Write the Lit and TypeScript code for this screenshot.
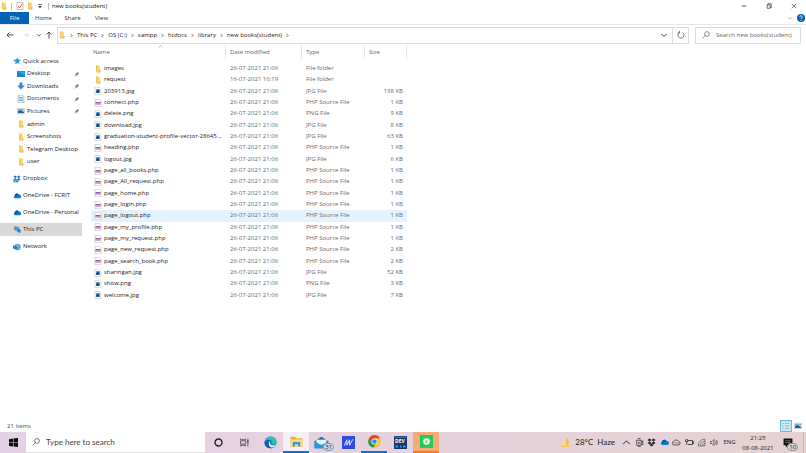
import { LitElement, html, css, svg, nothing } from "lit";
import type { TemplateResult } from "lit";
import { customElement, property, state } from "lit/decorators.js";
import { classMap } from "lit/directives/class-map.js";

const shapes: Record<string, [string, TemplateResult]> = {
  folder: ["0 0 16 16", svg`<path d="M4 1h8v14H4z" fill="#fbd978"/><path d="M4 1h3v14l-3-1z" fill="#f4c64f"/><path d="M11 10h2v5h-6z" fill="#eebd52"/>`],
  image: ["0 0 16 16", svg`<path d="M2 .5h9l3 3v12H2z" fill="#fff" stroke="#a9b1ba"/><path d="M4.500 4.500h7v7h-7z" fill="#1d6fb8"/><path d="M4.500 11.500v-3l3-2 4 5z" fill="#123f7a"/>`],
  php: ["0 0 16 16", svg`<path d="M2 .5h9l3 3v12H2z" fill="#fff" stroke="#aaa4b4"/><path d="M3 6h10v5H3z" fill="#8f5fa8"/><path d="M4 8h8v1H4z" fill="#e8d9ef"/>`],
  check: ["0 0 16 16", svg`<path d="M2 1h12v14H2z" fill="#fff" stroke="#8a8a8a"/><path d="M4 8l3 4 6-9" fill="none" stroke="#d9633b" stroke-width="2"/>`],
  star: ["0 0 16 16", svg`<path d="M9 1l2 4 5 1-4 3 1 5-4-2-5 3 1-5-5-4 6-1z" fill="#2f9be0"/>`],
  desktop: ["0 0 16 16", svg`<path d="M0 2h16v12H0z" fill="#1583d6"/><path d="M1 3h14v8z" fill="#2ba0ec"/>`],
  down: ["0 0 16 16", svg`<path d="M5 1h6v6h5l-8 8-8-8h5z" fill="#3d86c6"/>`],
  doc: ["0 0 16 16", svg`<path d="M2 .5h9l3 3v12H2z" fill="#e6eef4" stroke="#8d9ba8"/><path d="M4 5h8M4 8h8M4 11h8" stroke="#5d9bcb" stroke-width="1.500"/>`],
  picture: ["0 0 16 16", svg`<path d="M.5 2.500h15v11H.5z" fill="#e9f3fa" stroke="#93a5b5"/><path d="M2 4h12v3H2z" fill="#79bbe6"/><path d="M2 12V8l5-2 7 4v2z" fill="#245a93"/>`],
  pin: ["0 0 16 16", svg`<path d="M9 2l5 5-2 1-3 3-1 3-6-6 3-1 3-3z" fill="#7d8890"/><path d="M5 11l-4 4" stroke="#7d8890" stroke-width="1.500"/>`],
  dropbox: ["0 0 18 16", svg`<path d="M5 0l4 3-4 3-4-3zM13 0l4 3-4 3-4-3zM5 6l4 3-4 3-4-3zM13 6l4 3-4 3-4-3zM9 10l4 3-4 3-4-3z" fill="currentColor"/>`],
  dropboxOk: ["0 0 18 16", svg`<path d="M5 0l4 3-4 3-4-3zM13 0l4 3-4 3-4-3zM5 6l4 3-4 3-4-3zM13 6l4 3-4 3-4-3zM9 10l4 3-4 3-4-3z" fill="#1468e0"/><circle cx="4.500" cy="12" r="4" fill="#35a853"/><path d="M2.500 12l2 2 3-4" fill="none" stroke="#fff"/>`],
  cloud: ["0 0 18 12", svg`<path d="M4 11a4 4 0 0 1 0-7A5 5 0 0 1 13 3a4 4 0 0 1 2 8z" fill="#1279cf"/><path d="M4 4a5 5 0 0 1 9-1l-7 5z" fill="#0a5cab"/>`],
  cloudLine: ["0 0 18 12", svg`<path d="M4 11a3.500 3.500 0 0 1 0-7A5 5 0 0 1 13 3.500a4 4 0 0 1 1 7.500z" fill="none" stroke="#333" stroke-width="1.500"/><path d="M4 7h10" stroke="#333"/>`],
  pc: ["0 0 16 16", svg`<path d="M3 1l9 2v7L3 8z" fill="#3ba4e6" stroke="#5a7c98"/><path d="M9 6l6 1v7l-6-2z" fill="#1c83cf"/>`],
  network: ["0 0 16 16", svg`<circle cx="9" cy="8" r="6.500" fill="#4a9ed6"/><path d="M4 3c5 0 9 4 8 10M13 2C8 4 5 8 6 14" stroke="#b8def3" fill="none"/><path d="M0 5l8 2v6l-8-2z" fill="#2f7fb8"/>`],
  back: ["0 0 16 16", svg`<path d="M15 8H2M7 3L2 8l5 5" fill="none" stroke="currentColor" stroke-width="1.700"/>`],
  forward: ["0 0 16 16", svg`<path d="M1 8h13M9 3l5 5-5 5" fill="none" stroke="currentColor" stroke-width="1.500"/>`],
  up: ["0 0 16 16", svg`<path d="M8 15V2M3 7l5-5 5 5" fill="none" stroke="currentColor" stroke-width="1.700"/>`],
  chevDown: ["0 0 16 16", svg`<path d="M3 6l5 5 5-5" fill="none" stroke="currentColor" stroke-width="2"/>`],
  chevUp: ["0 0 16 16", svg`<path d="M2 11l6-6 6 6" fill="none" stroke="currentColor" stroke-width="1.700"/>`],
  chevRight: ["0 0 16 16", svg`<path d="M5 3l5 5-5 5" fill="none" stroke="currentColor" stroke-width="2"/>`],
  customize: ["0 0 16 16", svg`<path d="M3 4h10" stroke="#333" stroke-width="2"/><path d="M3 8h10l-5 6z" fill="#333"/>`],
  refresh: ["0 0 16 16", svg`<path d="M11 3a6 6 0 1 1-6 0M5 0v4H1" fill="none" stroke="#555" stroke-width="1.600"/>`],
  lens: ["0 0 16 16", svg`<circle cx="10" cy="6" r="4.800" fill="none" stroke="currentColor" stroke-width="1.400"/><path d="M6.500 9.500L1 15" stroke="currentColor" stroke-width="1.400"/>`],
  min: ["0 0 16 16", svg`<path d="M2 8h12" stroke="#222" stroke-width="2"/>`],
  restore: ["0 0 16 16", svg`<path d="M3 5h8v9H3zM5 5V2h9v10h-3" fill="none" stroke="#222" stroke-width="1.700"/>`],
  close: ["0 0 16 16", svg`<path d="M2 2l12 12M14 2L2 14" stroke="#222" stroke-width="1.600"/>`],
  help: ["0 0 16 16", svg`<circle cx="8" cy="8" r="8" fill="#0b62bb"/><path d="M5.500 6a2.500 2.500 0 1 1 3.500 2.300q-1 .5-1 1.700M8 11.500v2" fill="none" stroke="#fff" stroke-width="1.600"/>`],
  windows: ["0 0 16 16", svg`<path d="M0 2l7-1v6.500H0zM8 1l8-1v7.500H8zM0 8.500h7V15l-7-1zM8 8.500h8V16l-8-1z" fill="#0b0b0b"/>`],
  cortana: ["0 0 16 16", svg`<circle cx="8" cy="8" r="6.200" fill="none" stroke="#222" stroke-width="2.400"/>`],
  taskview: ["0 0 16 16", svg`<path d="M1 1v2h9V1M1 15v-2h9v2M1 5h9v6H1zM14 1v14" fill="none" stroke="#444" stroke-width="1.400"/><path d="M13 4h2v4h-2z" fill="#444"/>`],
  edge: ["0 0 24 24", svg`<circle cx="12" cy="12" r="11" fill="#1679cf"/><path d="M1 12C2 4 8 1 13 1c7 0 11 6 10 11-1 4-7 4-9 2 2-5-1-7-5-7-4 0-7 2-8 5z" fill="#37bda6"/><path d="M1 12C3 7 8 6 11 8c-4 2-5 9 2 13-6 3-12-2-12-9z" fill="#0f5cb0"/><path d="M12 9c-2 2-2 7 4 8 3 0 5-1 6-2-1 3-4 6-8 6-6-2-7-10-2-12z" fill="#dceaf4"/>`],
  explorer: ["0 0 24 22", svg`<path d="M1 2h8l2 3h12v15H1z" fill="#e9ae35"/><path d="M1 7h22v13H1z" fill="#fcdc7a"/><path d="M5 20v-7q0-1 1-1h12q1 0 1 1v7h-4v-4H9v4z" fill="#3d91d8"/>`],
  mail: ["0 0 28 22", svg`<path d="M1 9L13 1l12 8v12H1z" fill="#1268b4"/><path d="M4 6h18v9H4z" fill="#e5f4fc"/><path d="M1 9l12 7 12-7v12H1z" fill="#279bdc"/>`],
  mbrand: ["0 0 24 24", svg`<path d="M0 0h24v24H0z" fill="#3049de"/><path d="M4 18l5-11v10l5-10v10l6-11" fill="none" stroke="#e2eaff" stroke-width="1.800"/>`],
  chrome: ["0 0 24 24", svg`<circle cx="12" cy="12" r="11.500" fill="#f7c72f"/><path d="M2 6a11.500 11.500 0 0 1 20 0H12l-5 9z" fill="#db4437"/><path d="M2 6l6 9 6 2-4 6.500A11.500 11.500 0 0 1 2 6z" fill="#279b55"/><circle cx="12" cy="12" r="5.500" fill="#fff"/><circle cx="12" cy="12" r="4.200" fill="#3e82ed"/>`],
  dev: ["0 0 26 26", svg`<path d="M0 0h26v26H0z" fill="#14376d"/><path d="M1 1h24v3H1z" fill="#426899"/><path d="M3 21h5M12 21h3M18 21h5" stroke="#3a9ae2" stroke-width="4"/>`],
  green: ["0 0 24 24", svg`<path d="M0 0h24v24H0z" fill="#27c95b"/><circle cx="12" cy="12" r="6" fill="#fff"/><path d="M9 11h6M10 14h4" stroke="#27c95b" stroke-width="1.500"/>`],
  moon: ["0 0 24 24", svg`<path d="M13 1c6 3 8 10 5 15-3 4-8 5-12 3 6-2 10-10 7-18z" fill="#f6bf2b"/><path d="M3 22a4 4 0 0 1 1-7 5 5 0 0 1 8 0 4 4 0 0 1 2 7z" fill="#f4d9a0"/><path d="M1 20h20" stroke="#f6c545" stroke-width="3"/>`],
  meet: ["0 0 16 16", svg`<path d="M3 4h8v9H3zM11 7l3-2v7l-3-2M5 1h5M5 15.500h5" fill="none" stroke="#333" stroke-width="1.400"/><circle cx="7" cy="8.500" r="1.500" fill="#333"/>`],
  battery: ["0 0 18 14", svg`<path d="M5 3h10v8H6M15 5h2v4h-2M1 2v3h5V2M2 2V0M5 2V0M3.500 5v7" fill="none" stroke="#222" stroke-width="1.500"/>`],
  wifi: ["0 0 16 16", svg`<path d="M2 14A12 12 0 0 1 14 2M6 14a8 8 0 0 1 8-8M10 14a4 4 0 0 1 4-4M2 14h12V2" fill="none" stroke="#555" stroke-width="1.200"/>`],
  volume: ["0 0 18 16", svg`<path d="M1 6h3l4-4v12l-4-4H1zM11 5q2 3 0 6M13 3q4 5 0 10" fill="none" stroke="#333" stroke-width="1.300"/>`],
  notes: ["0 0 18 18", svg`<path d="M1 1h16v12H9l-4 4v-4H1z" fill="#111"/><path d="M4 5h10M4 8h10" stroke="#aaa"/>`],
  details: ["0 0 16 16", svg`<path d="M1 3h3M1 8h3M1 13h3M6 3h9M6 8h9M6 13h9" stroke="#8fa5b0" stroke-width="1.300"/>`],
};

@customElement("ui-icon")
class UiIcon extends LitElement {
  @property() name = "folder";
  static styles = css`
    :host { display: inline-block; flex: none; width: 8px; height: 8px; }
    svg { display: block; width: 100%; height: 100%; }
  `;
  render() {
    const [box, art] = shapes[this.name];
    return html`<svg viewBox=${box} aria-hidden="true">${art}</svg>`;
  }
}

type Entry = { name: string; date: string; type: string; size: string };
const D = "26-07-2021 21:06";
const file = (name: string, size = "1 KB"): Entry => ({
  name, size, date: D,
  type: name.endsWith("php") ? "PHP Source File" : name.endsWith("png") ? "PNG File" : "JPG File",
});
const entries: Entry[] = [
  { name: "images", date: D, type: "File folder", size: "" },
  { name: "request", date: "16-07-2021 10:19", type: "File folder", size: "" },
  file("203913.jpg", "198 KB"), file("connect.php"), file("delete.png", "9 KB"), file("download.jpg", "8 KB"),
  file("graduation-student-profile-vector-28645...", "63 KB"),
  file("heading.php"), file("logout.jpg", "6 KB"), file("page_all_books.php"), file("page_All_request.php"),
  file("page_home.php"), file("page_login.php"), file("page_logout.php"), file("page_my_profile.php"),
  file("page_my_request.php"), file("page_new_request.php", "2 KB"), file("page_search_book.php", "2 KB"),
  file("sharingan.jpg", "52 KB"), file("show.png", "3 KB"), file("welcome.jpg", "7 KB"),
];
const iconOf = (e: Entry) => (e.type === "File folder" ? "folder" : e.type.startsWith("PHP") ? "php" : "image");

const quick: [string, string, boolean][] = [
  ["Desktop", "desktop", true], ["Downloads", "down", true], ["Documents", "doc", true], ["Pictures", "picture", true],
  ["admin", "folder", false], ["Screenshots", "folder", false], ["Telegram Desktop", "folder", false], ["user", "folder", false],
];
const places: [string, string][] = [
  ["Dropbox", "dropboxOk"], ["OneDrive - FCRIT", "cloud"], ["OneDrive - Personal", "cloud"], ["This PC", "pc"], ["Network", "network"],
];
const crumbs = ["This PC", "OS (C:)", "xampp", "htdocs", "library", "new books(student)"];

const controls = css`
  * { box-sizing: border-box; }
  button, input { font: inherit; color: inherit; background: none; border: 0; padding: 0; margin: 0; border-radius: 0; outline: 0; }
  button { display: flex; align-items: center; justify-content: center; white-space: nowrap; }
  a { color: inherit; text-decoration: none; }
  input { min-width: 0; flex: 1; }
  input::placeholder { color: inherit; opacity: 1; }
`;

@customElement("window-header")
class WindowHeader extends LitElement {
  static styles = [controls, css`
    :host { display: block; color: #333; }
    .title { display: flex; align-items: center; height: 12px; color: #111; }
    .title .quick { display: flex; align-items: center; }
    .bar { width: 1px; height: 7px; background: #bbb; }
    .quick .lead { width: 8px; }
    .quick .bar { margin: 0 3px; }
    .quick button { width: 10px; }
    .small { width: 6px; height: 6px; }
    .caption { margin-left: auto; display: flex; }
    .caption button { width: 25px; height: 12px; }
    .caption ui-icon { width: 6px; height: 6px; }
    .tabs { display: flex; align-items: center; height: 13px; border-bottom: 1px solid #e6e6e6; }
    .tabs button { width: 29px; height: 12px; }
    .tabs .file { background: #0563b1; color: #fff; }
    .tabs .fold { width: 12px; margin-left: auto; color: #999; }
    .tabs .help { width: 10px; }
    .nav { display: flex; align-items: center; height: 20px; padding: 0 5px 0 2px; }
    .nav .step { width: 16px; height: 16px; }
    .nav .step.tight { width: 10px; }
    .nav .dim { color: #ccc; }
    .address { flex: 1; display: flex; align-items: center; height: 17px; margin: 0 6px 0 3px; border: 1px solid #ddd; }
    .crumbs { display: flex; align-items: center; flex: 1; margin: 0; padding: 0; list-style: none; color: #222; }
    .crumbs li { display: flex; align-items: center; }
    .sep { width: 5px; height: 5px; margin: 0 3px; }
    .address .go { width: 16px; height: 15px; }
    .address .reload { border-left: 1px solid #ddd; }
    .search { display: flex; align-items: center; width: 106px; height: 17px; padding: 0 6px; gap: 6px; border: 1px solid #ddd; color: #666; }
  `];
  render() {
    return html`
      <header class="title">
        <div class="quick">
          <ui-icon class="lead" name="folder"></ui-icon><span class="bar"></span>
          <button aria-label="Properties"><ui-icon name="check"></ui-icon></button>
          <button aria-label="New folder"><ui-icon name="folder"></ui-icon></button>
          <button aria-label="Customize"><ui-icon class="small" name="customize"></ui-icon></button>
          <span class="bar"></span>
        </div>
        <span>new books(student)</span>
        <div class="caption">
          <button aria-label="Minimize"><ui-icon name="min"></ui-icon></button>
          <button aria-label="Restore"><ui-icon name="restore"></ui-icon></button>
          <button aria-label="Close"><ui-icon name="close"></ui-icon></button>
        </div>
      </header>
      <div class="tabs">
        <button class="file">File</button><button>Home</button><button>Share</button><button>View</button>
        <button class="fold" aria-label="Expand ribbon"><ui-icon class="small" name="chevDown"></ui-icon></button>
        <button class="help" aria-label="Help"><ui-icon name="help"></ui-icon></button>
      </div>
      <div class="nav">
        <button class="step" aria-label="Back"><ui-icon name="back"></ui-icon></button>
        <button class="step dim" aria-label="Forward"><ui-icon class="small" name="forward"></ui-icon></button>
        <button class="step tight" aria-label="Recent"><ui-icon class="small" name="chevDown"></ui-icon></button>
        <button class="step tight" aria-label="Up"><ui-icon name="up"></ui-icon></button>
        <div class="address">
          <ui-icon name="folder"></ui-icon>
          <ol class="crumbs">
            <li><ui-icon class="sep" name="chevRight"></ui-icon></li>
            ${crumbs.map((c) => html`<li><button>${c}</button><ui-icon class="sep" name="chevRight"></ui-icon></li>`)}
          </ol>
          <button class="go" aria-label="Previous locations"><ui-icon name="chevDown"></ui-icon></button>
          <button class="go reload" aria-label="Refresh"><ui-icon name="refresh"></ui-icon></button>
        </div>
        <label class="search"><ui-icon name="lens"></ui-icon>
          <input type="text" aria-label="Search" placeholder="Search new books(student)" /></label>
      </div>`;
  }
}

@customElement("nav-tree")
class NavTree extends LitElement {
  static styles = [controls, css`
    :host { display: block; width: 82px; flex: none; padding-top: 10px; color: #222; }
    ul { margin: 0; padding: 0; list-style: none; display: grid; }
    .quick { height: 113px; grid-auto-rows: 1fr; margin-bottom: 4px; }
    .places { grid-auto-rows: 13px; row-gap: 4px; }
    a { display: flex; align-items: center; gap: 2px; height: 100%; padding: 0 2px 0 13px; white-space: nowrap; }
    a.sub { padding-left: 17px; }
    .pin { width: 6px; height: 6px; margin-left: auto; }
    .current { background: #d9d9d9; }
  `];
  render() {
    return html`<nav>
      <ul class="quick">
        <li><a href="#quick"><ui-icon name="star"></ui-icon>Quick access</a></li>
        ${quick.map(([n, i, p]) => html`<li><a class="sub" href="#${n}"><ui-icon name=${i}></ui-icon>${n}
          ${p ? html`<ui-icon class="pin" name="pin"></ui-icon>` : nothing}</a></li>`)}
      </ul>
      <ul class="places">
        ${places.map(([n, i]) => html`<li><a class=${classMap({ current: n === "This PC" })} href="#${n}"><ui-icon name=${i}></ui-icon>${n}</a></li>`)}
      </ul></nav>`;
  }
}

@customElement("file-list")
class FileList extends LitElement {
  @state() private hovered = "page_logout.php";
  static styles = [controls, css`
    :host { display: block; flex: 1; padding-left: 9px; }
    table { border-collapse: separate; border-spacing: 0; table-layout: fixed; width: 316px; height: 256px; color: #6a6a6a; }
    .c-name { width: 135px; } .c-date { width: 76px; } .c-type { width: 63px; } .c-size { width: 42px; }
    th { height: 14px; padding: 0 0 0 2px; font-weight: 400; border-right: 1px solid #e6e6e6; color: #52657d; position: relative; }
    th + th { padding-left: 4px; }
    .sort { position: absolute; top: -1px; left: 50%; width: 5px; height: 5px; color: #888; }
    .gap td { height: 4px; }
    td { padding: 0 4px; white-space: nowrap; line-height: 11px; }
    .name { display: flex; align-items: center; gap: 2px; margin-left: -1px; color: #222; }
    .size { text-align: right; }
    .hover { background: #e5f3ff; }
  `];
  render() {
    return html`<table>
      <colgroup><col class="c-name" /><col class="c-date" /><col class="c-type" /><col class="c-size" /></colgroup>
      <thead><tr>
        <th scope="col"><ui-icon class="sort" name="chevUp"></ui-icon><button>Name</button></th>
        <th scope="col"><button>Date modified</button></th><th scope="col"><button>Type</button></th><th scope="col"><button>Size</button></th>
      </tr><tr class="gap"><td colspan="4"></td></tr></thead>
      <tbody>${entries.map((e) => html`<tr class=${classMap({ hover: e.name === this.hovered })} @mouseenter=${() => (this.hovered = e.name)}>
        <td><div class="name"><ui-icon name=${iconOf(e)}></ui-icon>${e.name}</div></td>
        <td>${e.date}</td><td>${e.name.startsWith("graduation") ? "JPG File" : e.type}</td><td class="size">${e.size}</td></tr>`)}</tbody>
    </table>`;
  }
}

@customElement("task-bar")
class TaskBar extends LitElement {
  static styles = [controls, css`
    :host { display: flex; height: 21px; flex: none; background: linear-gradient(90deg, #e5d1e6, #e6d2dc 55%, #e7d1d2); color: #222; }
    button { width: 26px; height: 21px; position: relative; flex: none; }
    .start ui-icon { width: 9px; height: 9px; }
    .search { display: flex; align-items: center; gap: 6px; width: 179px; padding: 0 6px; background: #fff; border-bottom: 1px solid #ddd; font-family: Lato, sans-serif; font-size: 8px; color: #444; }
    .app ui-icon { width: 13px; height: 13px; }
    .app.thin ui-icon { width: 9px; height: 9px; }
    .app.wide ui-icon { width: 16px; }
    .open { border-bottom: 2px solid #0a74d1; }
    .active { background: #f5eef5; }
    .alert { background: #f4ab76; border-bottom: 2px solid #f77d1b; }
    .badge { position: absolute; right: 1px; bottom: 2px; padding: 0 1px; border-radius: 4px; background: #d3dbe0; border: 1px solid #8b979f; font-size: 6px; line-height: 6px; color: #111; }
    .tag { position: absolute; left: 0; right: 0; top: 6px; font-size: 5px; line-height: 6px; font-weight: 700; color: #fff; text-align: center; }
    .tray { margin-left: auto; display: flex; align-items: center; }
    .tray .weather { width: auto; gap: 4px; margin-right: 5px; font-family: Lato, sans-serif; font-size: 8px; }
    .weather ui-icon { width: 11px; height: 11px; }
    .tray .mini { width: 13px; }
    .tray .mini.narrow { width: 12px; }
    .mini ui-icon { width: 9px; height: 9px; }
    .tray .lang { width: 19px; }
    .tray .clock { width: 38px; flex-direction: column; line-height: 10px; }
    .tray .note { width: 22px; margin-right: 4px; }
    .note ui-icon { width: 10px; height: 10px; }
    .peek { width: 1px; height: 21px; margin-right: 2px; background: #cbb9bd; }
  `];
  render() {
    const app = (label: string, icon: string, cls = "", extra: unknown = nothing) =>
      html`<button class="app ${cls}" aria-label=${label}><ui-icon name=${icon}></ui-icon>${extra}</button>`;
    return html`
      <button class="start" aria-label="Start"><ui-icon name="windows"></ui-icon></button>
      <label class="search"><ui-icon name="lens"></ui-icon><input type="text" aria-label="Search Windows" placeholder="Type here to search" /></label>
      ${app("Cortana", "cortana", "thin")}${app("Task View", "taskview", "thin")}${app("Edge", "edge")}
      ${app("File Explorer", "explorer", "open active")}${app("Mail", "mail", "wide", html`<span class="badge">31</span>`)}
      ${app("Editor", "mbrand")}${app("Chrome", "chrome", "open")}${app("Dev-C++", "dev", "", html`<span class="tag">DEV</span>`)}
      ${app("Messages", "green", "alert")}
      <div class="tray">
        <button class="weather"><ui-icon name="moon"></ui-icon><span>28°C</span><span>Haze</span></button>
        ${[["chevUp", "Hidden icons"], ["meet", "Meet Now"], ["dropbox", "Dropbox"], ["cloud", "OneDrive"], ["cloudLine", "OneDrive personal"], ["battery", "Battery"], ["wifi", "Network"], ["volume", "Volume"]].map(
          ([i, l], k) => html`<button class="mini ${k % 2 ? "narrow" : ""}" aria-label=${l}><ui-icon name=${i}></ui-icon></button>`)}
        <button class="lang">ENG</button>
        <button class="clock"><span>21:25</span><span>08-08-2021</span></button>
        <button class="note" aria-label="Notifications"><ui-icon name="notes"></ui-icon><span class="badge">10</span></button>
        <span class="peek"></span>
      </div>`;
  }
}

@customElement("app-root")
class AppRoot extends LitElement {
  static styles = [controls, css`
    :host { display: flex; flex-direction: column; min-height: 100vh; background: #fff; font-family: "Open Sans", "Noto Sans", sans-serif; font-size: 6px; line-height: 9px; }
    main { display: flex; flex: 1; }
    .status { display: flex; align-items: center; height: 12px; padding: 0 2px 0 7px; color: #3c4f66; }
    .views { margin-left: auto; display: flex; }
    .views button { width: 12px; height: 12px; }
    .views .on { background: #cbe8f6; border: 1px solid #6fb9dc; }
  `];
  render() {
    return html`
      <window-header></window-header>
      <main><nav-tree></nav-tree><file-list></file-list></main>
      <footer class="status"><span>21 items</span>
        <div class="views">
          <button class="on" aria-label="Details view"><ui-icon name="details"></ui-icon></button>
          <button aria-label="Large icons view"><ui-icon name="picture"></ui-icon></button>
        </div>
      </footer>
      <task-bar></task-bar>`;
  }
}
